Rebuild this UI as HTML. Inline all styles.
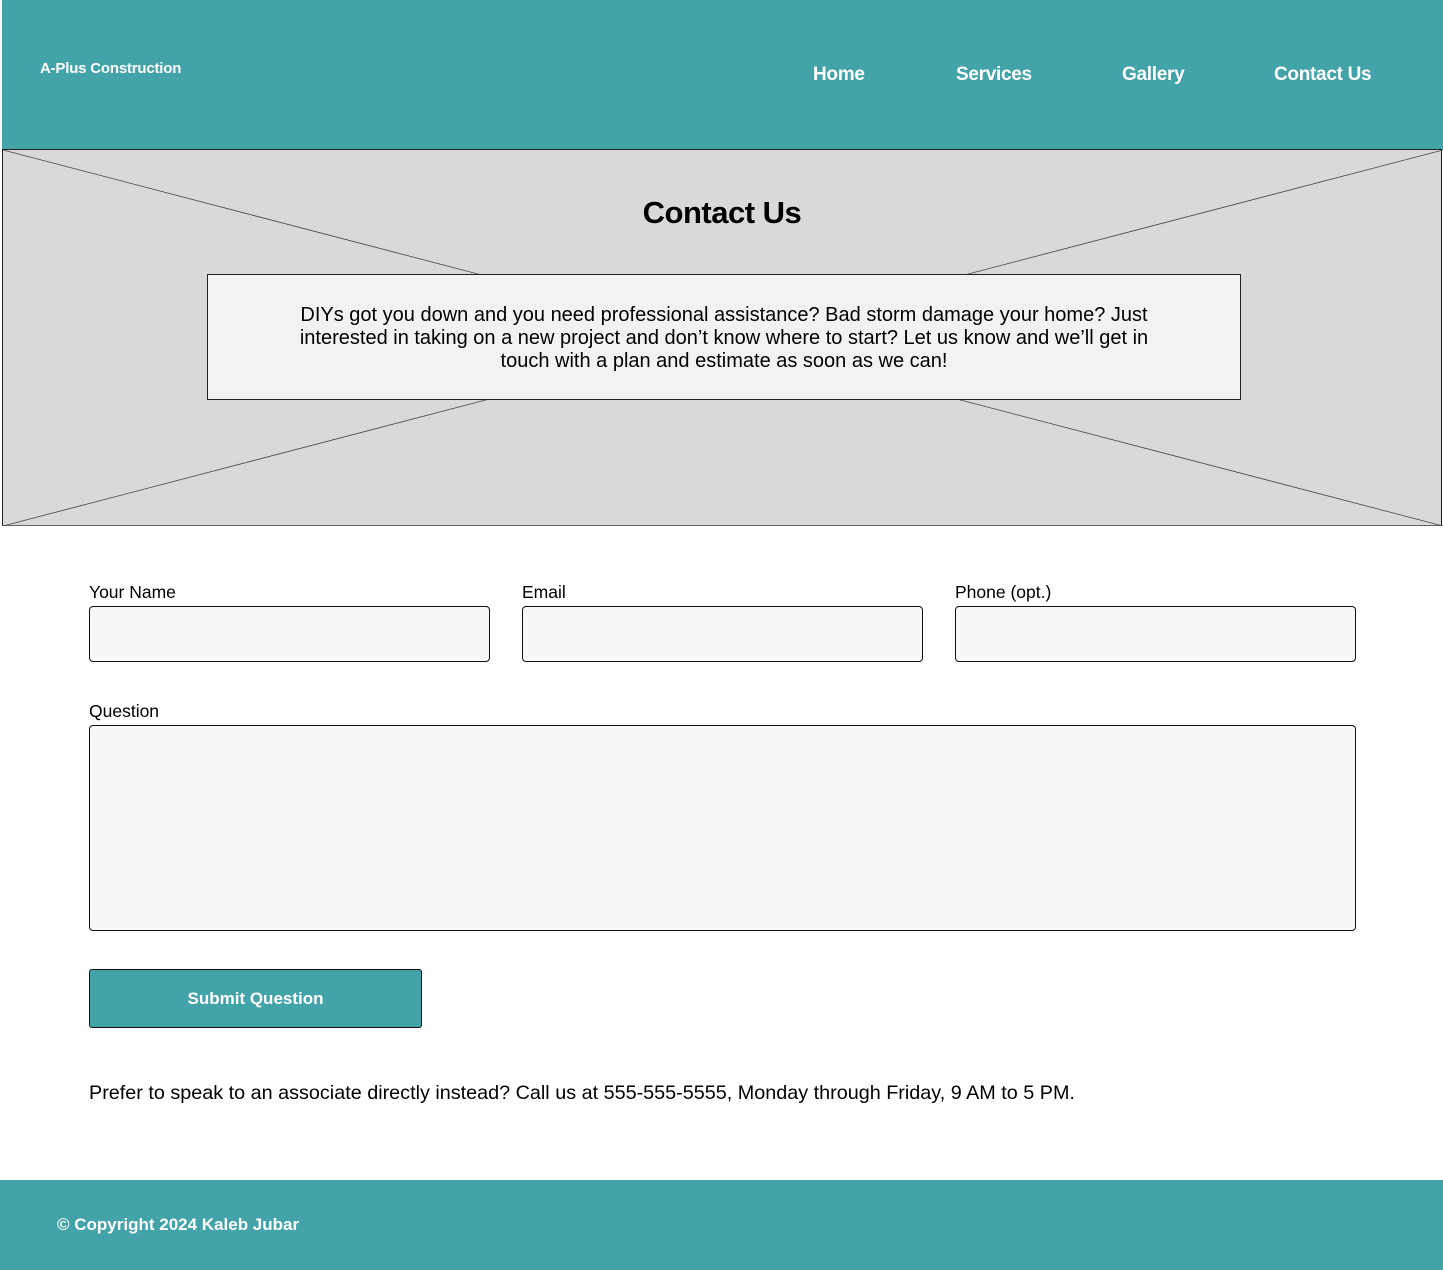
<!DOCTYPE html>
<html><head><meta charset="utf-8"><style>
*{margin:0;padding:0;box-sizing:border-box}
body{width:1443px;height:1270px;background:#fff;font-family:"Liberation Sans",Arial,sans-serif;position:relative;overflow:hidden;color:#000}
.hdr{position:absolute;left:2px;top:0;width:1441px;height:150px;background:#42a3a9}
.logo{position:absolute;left:38px;top:60px;color:#fff;font-size:15px;font-weight:bold;letter-spacing:-0.2px}
.nav a{position:absolute;top:64px;color:#fff;font-size:19px;text-decoration:none;font-weight:bold;letter-spacing:-0.3px}
.hero{position:absolute;left:2px;top:149px;width:1440px;height:377px;background:#d9d9d9;border:1px solid #222;border-bottom-color:#666}
.hero svg{position:absolute;left:0;top:0}
.hero h1{position:absolute;left:0;right:0;top:45px;text-align:center;font-size:31px;font-weight:bold;letter-spacing:-0.5px}
.box{position:absolute;left:204px;top:124px;width:1034px;height:126px;background:#f2f2f2;border:1px solid #222;text-align:center;font-size:20px;line-height:23px;padding:29px 85px 0}
label{position:absolute;font-size:17.5px}
.in{position:absolute;background:#f8f8f8;border:1px solid #111;border-radius:4px}
.btn{position:absolute;left:89px;top:969px;width:333px;height:59px;background:#42a3a9;border:1px solid #111;border-radius:3px;color:#fff;font-size:17px;font-weight:bold;text-align:center;line-height:58px}
.note{position:absolute;left:89px;top:1082px;font-size:19.8px}
.ftr{position:absolute;left:0;top:1180px;width:1443px;height:90px;background:#42a3a9;color:#fff;font-size:17px;font-weight:bold}
.ftr span{position:absolute;left:57px;top:35px}
</style></head><body>
<div class="hdr">
<div class="logo">A-Plus Construction</div>
<div class="nav"><a style="left:811px">Home</a><a style="left:954px">Services</a><a style="left:1120px">Gallery</a><a style="left:1272px">Contact Us</a></div>
</div>
<div class="hero">
<svg width="1440" height="376"><line x1="0" y1="0" x2="1440" y2="376" stroke="#444" stroke-width="0.8"/><line x1="1440" y1="0" x2="0" y2="376" stroke="#444" stroke-width="0.8"/></svg>
<h1>Contact Us</h1>
<div class="box">DIYs got you down and you need professional assistance? Bad storm damage your home? Just interested in taking on a new project and don’t know where to start? Let us know and we’ll get in touch with a plan and estimate as soon as we can!</div>
</div>
<label style="left:89px;top:582px">Your Name</label>
<label style="left:522px;top:582px">Email</label>
<label style="left:955px;top:582px">Phone (opt.)</label>
<div class="in" style="left:89px;top:606px;width:401px;height:56px"></div>
<div class="in" style="left:522px;top:606px;width:401px;height:56px"></div>
<div class="in" style="left:955px;top:606px;width:401px;height:56px"></div>
<label style="left:89px;top:701px">Question</label>
<div class="in" style="left:89px;top:725px;width:1267px;height:206px"></div>
<div class="btn">Submit Question</div>
<div class="note">Prefer to speak to an associate directly instead? Call us at 555-555-5555, Monday through Friday, 9 AM to 5 PM.</div>
<div class="ftr"><span>© Copyright 2024 Kaleb Jubar</span></div>
</body></html>
